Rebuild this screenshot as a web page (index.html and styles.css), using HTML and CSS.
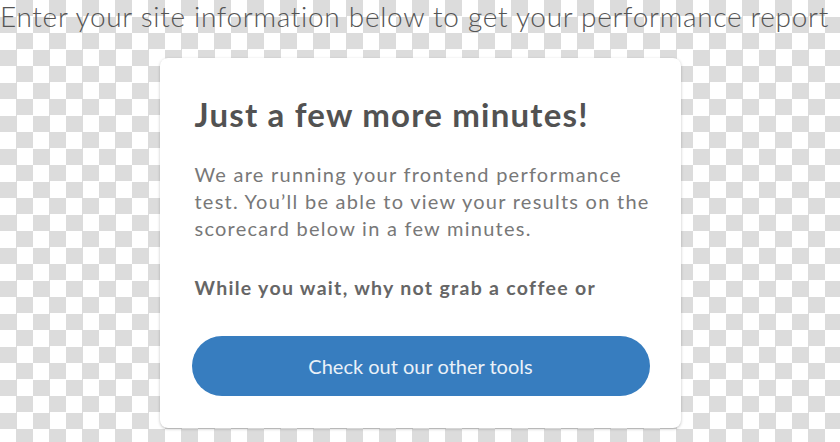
FILE: index.html
```html
<!DOCTYPE html>
<html lang="en">
<head>
  <meta charset="UTF-8">
  <title>Performance report</title>
  <link rel="stylesheet" href="styles.css">
</head>
<body>
  <p class="intro">Enter your site information below to get your performance report</p>
  <section class="card">
    <h2>Just a few more minutes!</h2>
    <p class="note">We are running your frontend performance test. You’ll be able to view your results on the scorecard below in a few minutes.</p>
    <p class="wait">While you wait, why not grab a coffee or</p>
    <button class="tools" type="button">Check out our other tools</button>
  </section>
</body>
</html>
```

FILE: styles.css
```css
* {
  margin: 0;
  padding: 0;
  box-sizing: border-box;
}
body {
  font-family: 'Lato', 'Noto Sans', sans-serif;
  min-height: 100vh;
  background-color: #fff;
  background-image:
    conic-gradient(#dcdcdc 25%, #fff 0 50%, #dcdcdc 0 75%, #fff 0);
  background-size: 33px 33px;
  overflow: hidden;
}
.intro {
  color: #555;
  font-size: 28px;
  font-weight: 300;
  letter-spacing: 0.7px;
  line-height: 32px;
  white-space: nowrap;
}
/* Carte blanche au centre */
.card {
  width: 521px;
  height: 370px;
  margin: 26px auto 0;
  background: #fff;
  border-radius: 8px;
  box-shadow: 0 1px 3px rgba(0, 0, 0, 0.25);
  padding: 34px 20px 0 35px;
}
.card h2 {
  color: #525252;
  font-size: 33px;
  font-weight: 700;
  letter-spacing: 1.2px;
  line-height: 44px;
}
.note {
  color: #787878;
  font-size: 20px;
  letter-spacing: 1.25px;
  line-height: 27px;
  margin-top: 25px;
}
.wait {
  color: #666;
  font-size: 19.5px;
  font-weight: 700;
  letter-spacing: 1.3px;
  margin-top: 34px;
}
.tools {
  display: block;
  width: 458px;
  height: 60px;
  margin: 37px 0 0 -3px;
  border: none;
  border-radius: 30px;
  background: #377dbf;
  color: #eaf1f8;
  font-family: inherit;
  font-size: 20px;
  cursor: pointer;
}
```
